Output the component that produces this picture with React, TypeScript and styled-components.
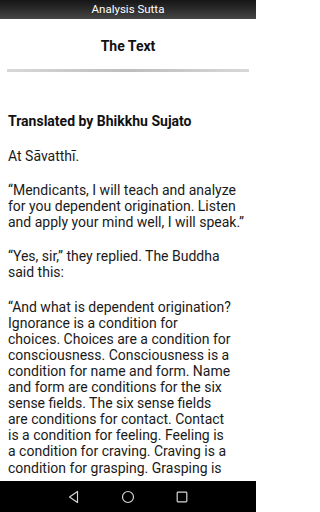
import React from "react";
import styled, { createGlobalStyle } from "styled-components";

const GlobalStyle = createGlobalStyle`
  html, body { margin: 0; padding: 0; background: #fff; }
  body { font-family: Roboto, "Noto Sans", Arial, sans-serif; }
  * { box-sizing: border-box; }
`;

const Screen = styled.div`
  width: 256px;
  height: 512px;
  display: flex;
  flex-direction: column;
  overflow: hidden;
  background: #fff;
`;

const TopBar = styled.header`
  height: 19px;
  flex: none;
  display: flex;
  align-items: center;
  justify-content: center;
  background: linear-gradient(to bottom, #161616 0%, #2e2e2e 55%, #474747 100%);
  color: #fff;
  font-family: Roboto, Arial, sans-serif;
  font-size: 11.5px;
  line-height: 1;
`;

const Content = styled.main`
  flex: 1;
  overflow: hidden;
  padding: 0 8px;
  font-family: Roboto, Arial, sans-serif;
  color: #111;
`;

const Title = styled.h1`
  margin: 0;
  padding-top: 18px;
  font-size: 14px;
  line-height: 18px;
  font-weight: 700;
  text-align: center;
  color: #111;
`;

const Divider = styled.div`
  margin: 14px -1px 0;
  height: 3px;
  background: linear-gradient(to right, #d8d8d8 0%, #bdbdbd 50%, #d8d8d8 100%);
`;

const Byline = styled.h2`
  margin: 41px 0 0;
  font-size: 14px;
  line-height: 17px;
  font-weight: 700;
  color: #111;
`;

const Para = styled.p`
  margin: 18px 0 0;
  font-size: 14px;
  line-height: 16.1px;
  font-weight: 400;
  color: #1a1a1a;
  white-space: nowrap;
`;

const NavBar = styled.nav`
  height: 31px;
  flex: none;
  background: #000;
  display: flex;
  align-items: center;
  justify-content: center;
  gap: 38px;
`;

const NavButton = styled.span`
  width: 16px;
  height: 16px;
  display: flex;
  align-items: center;
  justify-content: center;
`;

const paragraphs: string[][] = [
  ["At Sāvatthī."],
  [
    "“Mendicants, I will teach and analyze",
    "for you dependent origination. Listen",
    "and apply your mind well, I will speak.”",
  ],
  ["“Yes, sir,” they replied. The Buddha", "said this:"],
  [
    "“And what is dependent origination?",
    "Ignorance is a condition for",
    "choices. Choices are a condition for",
    "consciousness. Consciousness is a",
    "condition for name and form. Name",
    "and form are conditions for the six",
    "sense fields. The six sense fields",
    "are conditions for contact. Contact",
    "is a condition for feeling. Feeling is",
    "a condition for craving. Craving is a",
    "condition for grasping. Grasping is",
  ],
];

export default function App() {
  return (
    <>
      <GlobalStyle />
      <Screen>
        <TopBar>Analysis Sutta</TopBar>
        <Content>
          <Title>The Text</Title>
          <Divider />
          <Byline>Translated by Bhikkhu Sujato</Byline>
          {paragraphs.map((lines, i) => (
            <Para key={i}>
              {lines.map((line, j) => (
                <React.Fragment key={j}>
                  {j > 0 && <br />}
                  {line}
                </React.Fragment>
              ))}
            </Para>
          ))}
        </Content>
        <NavBar>
          <NavButton>
            <svg width="14" height="14" viewBox="0 0 14 14">
              <path d="M10.5 1.5 L10.5 12.5 L2.5 7 Z" fill="none" stroke="#d6d6d6" strokeWidth="1.2" strokeLinejoin="round" />
            </svg>
          </NavButton>
          <NavButton>
            <svg width="14" height="14" viewBox="0 0 14 14">
              <circle cx="7" cy="7" r="5.5" fill="none" stroke="#d6d6d6" strokeWidth="1.2" />
            </svg>
          </NavButton>
          <NavButton>
            <svg width="14" height="14" viewBox="0 0 14 14">
              <rect x="2.2" y="2.2" width="9.6" height="9.6" rx="0.8" fill="none" stroke="#d6d6d6" strokeWidth="1.2" />
            </svg>
          </NavButton>
        </NavBar>
      </Screen>
    </>
  );
}
